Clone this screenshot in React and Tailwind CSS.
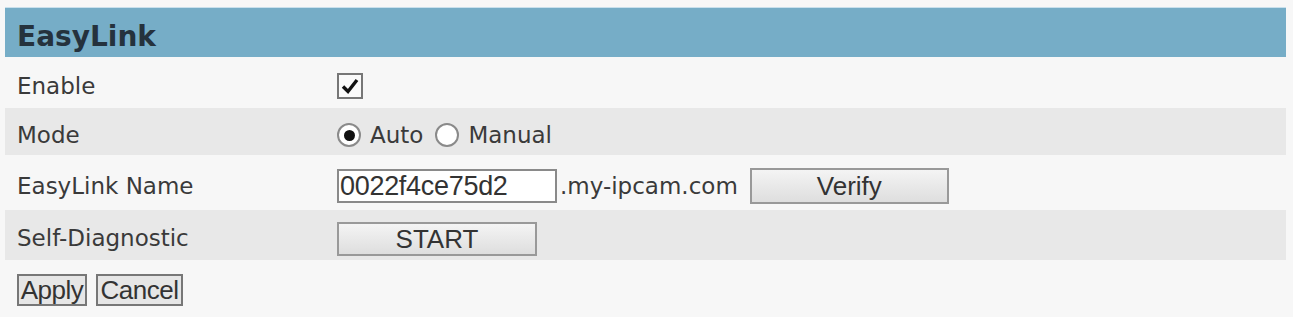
import React from 'react';

const Row = ({ label, gray, h, children }) => (
  <div className={`flex items-center pt-[7px] ${h} ${gray ? 'bg-[#e8e8e8]' : ''}`}>
    <div className="w-[332px] pl-3 text-[23px] text-[#3a3a3a]">{label}</div>
    <div className="flex items-center">{children}</div>
  </div>
);

const Radio = ({ checked }) => (
  <span className="w-[24px] h-[24px] rounded-full border-2 border-[#8a8a8a] bg-white flex items-center justify-center">
    {checked && <span className="w-[11px] h-[11px] rounded-full bg-[#111]"></span>}
  </span>
);

const App = () => {
  return (
    <div className="w-[1293px] h-[317px] bg-[#f7f7f7] pt-[7px] pl-[5px] pr-[7px]" style={{ fontFamily: '"DejaVu Sans", Verdana, sans-serif' }}>
      {/* Header */}
      <div className="h-[50px] bg-[#76adc7] border-t border-[#c9e0ec] flex items-center pl-3 pt-[9px]">
        <h2 className="text-[28px] font-bold text-[#25323d]">EasyLink</h2>
      </div>

      <Row label="Enable" h="h-[51px]">
        <span className="w-[26px] h-[26px] border-2 border-[#777] bg-[#fafafa] flex items-center justify-center">
          <svg width="20" height="20" viewBox="0 0 20 20">
            <path d="M3 10.5 L8 15.5 L17 4" fill="none" stroke="#111" strokeWidth="3.4" />
          </svg>
        </span>
      </Row>

      <Row label="Mode" gray h="h-[47px]">
        <Radio checked />
        <span className="ml-[9px] text-[23px] text-[#3a3a3a]">Auto</span>
        <span className="ml-[12px]"><Radio /></span>
        <span className="ml-[9px] text-[23px] text-[#3a3a3a]">Manual</span>
      </Row>

      <Row label="EasyLink Name" h="h-[55px]">
        <input
          type="text"
          defaultValue="0022f4ce75d2"
          className="w-[220px] h-[34px] border-2 border-[#8a8a8a] bg-white px-[1px] text-[27px] text-[#333] leading-none outline-none tracking-[-0.3px]"
          style={{ fontFamily: '"Liberation Sans", Arial, sans-serif' }}
        />
        <span className="ml-[3px] text-[23px] text-[#3a3a3a]">.my-ipcam.com</span>
        <button
          className="ml-[12px] w-[199px] h-[36px] border-2 border-[#999] bg-gradient-to-b from-[#f4f4f4] to-[#dedede] text-[26px] text-[#333] leading-none"
          style={{ fontFamily: '"Liberation Sans", Arial, sans-serif' }}
        >
          Verify
        </button>
      </Row>

      <Row label="Self-Diagnostic" gray h="h-[50px]">
        <button
          className="w-[200px] h-[34px] border-2 border-[#999] bg-gradient-to-b from-[#f4f4f4] to-[#dedede] text-[26px] text-[#333] leading-none"
          style={{ fontFamily: '"Liberation Sans", Arial, sans-serif' }}
        >
          START
        </button>
      </Row>

      <div className="flex items-center gap-[9px] pl-3 pt-[4px] h-[56px]" style={{ fontFamily: '"Liberation Sans", Arial, sans-serif' }}>
        <button className="h-[32px] w-[70px] border-2 border-[#777] bg-[#e6e6e6] text-[26px] text-[#333] leading-none tracking-[-0.5px]">Apply</button>
        <button className="h-[32px] w-[87px] border-2 border-[#777] bg-[#e6e6e6] text-[26px] text-[#333] leading-none tracking-[-0.5px]">Cancel</button>
      </div>
    </div>
  );
};

export default App;
